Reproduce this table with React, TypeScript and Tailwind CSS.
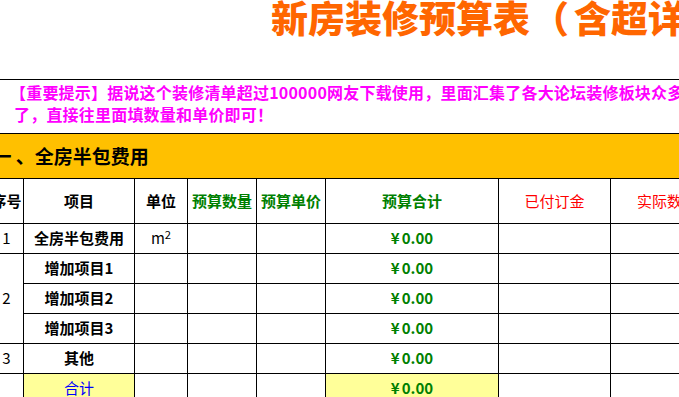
const cn = "font-['Noto_Sans_CJK_SC','Noto_Sans',sans-serif]";

const items = [
  { no: "1", name: "全房半包费用", unit: true },
  { no: "2", name: "增加项目1", span: 3 },
  { no: null, name: "增加项目2" },
  { no: null, name: "增加项目3" },
  { no: "3", name: "其他" },
];

function Money({ yellow }: { yellow?: boolean }) {
  return (
    <td className={`border border-black text-center font-bold text-[15px] text-[#008000] ${yellow ? "bg-[#ffff99]" : ""}`}>
      ¥<span className="ml-[2px]">0.00</span>
    </td>
  );
}

function Empty({ n }: { n: number }) {
  return (
    <>
      {Array.from({ length: n }).map((_, i) => (
        <td key={i} className="border border-black" />
      ))}
    </>
  );
}

export default function App() {
  return (
    <div className={`w-[679px] h-[397px] overflow-hidden bg-white ${cn}`}>
      {/* 标题 */}
      <div className="h-[80px] border-b border-black pl-[271px] whitespace-nowrap">
        <div className="text-[37px] leading-[35px] font-black text-[#ff6600]">
          新房装修预算表<span className="ml-[2px] mr-[5px]">（</span>含超详细清单）
        </div>
      </div>

      {/* 提示 */}
      <div className="h-[53px] pl-[10px] pt-px text-[16px] leading-[22px] font-bold tracking-[0.2px] text-[#ff00ff] whitespace-nowrap">
        <div>【重要提示】据说这个装修清单超过100000网友下载使用，里面汇集了各大论坛装修板块众多网友的经验</div>
        <div className="pl-[4px]">了，直接往里面填数量和单价即可！</div>
      </div>

      {/* 表格 */}
      <table className="table-fixed border-collapse -ml-[11px] w-[734px]">
        <colgroup>
          <col className="w-[34px]" />
          <col className="w-[111px]" />
          <col className="w-[53px]" />
          <col className="w-[69px]" />
          <col className="w-[69px]" />
          <col className="w-[173px]" />
          <col className="w-[112px]" />
          <col className="w-[113px]" />
        </colgroup>
        <tbody>
          <tr className="h-[45px]">
            <td colSpan={8} className="border-y border-black bg-[#ffc000] pl-[3px] text-[19px] font-bold text-black whitespace-nowrap">
              一 、全房半包费用
            </td>
          </tr>
          <tr className="h-[45px] text-[15px] text-center">
            <td className="border border-black font-bold whitespace-nowrap">序号</td>
            <td className="border border-black font-bold">项目</td>
            <td className="border border-black font-bold">单位</td>
            <td className="border border-black font-bold text-[#008000] whitespace-nowrap">预算数量</td>
            <td className="border border-black font-bold text-[#008000] whitespace-nowrap">预算单价</td>
            <td className="border border-black font-bold text-[#008000]">预算合计</td>
            <td className="border border-black text-[#ff0000]">已付订金</td>
            <td className="border border-black text-[#ff0000] whitespace-nowrap">实际数量</td>
          </tr>
          {items.map((it, i) => (
            <tr key={i} className="h-[30px] text-[15px] text-center">
              {it.no !== null && (
                <td rowSpan={it.span ?? 1} className="border border-black">
                  {it.no}
                </td>
              )}
              <td className="border border-black font-bold whitespace-nowrap">{it.name}</td>
              <td className="border border-black">
                {it.unit && (
                  <span>
                    m<sup>2</sup>
                  </span>
                )}
              </td>
              <Empty n={2} />
              <Money />
              <Empty n={2} />
            </tr>
          ))}
          <tr className="h-[30px] text-[15px] text-center">
            <td className="border border-black" />
            <td className="border border-black bg-[#ffff99] text-[#0000ff]">合计</td>
            <Empty n={3} />
            <Money yellow />
            <Empty n={2} />
          </tr>
        </tbody>
      </table>
    </div>
  );
}
